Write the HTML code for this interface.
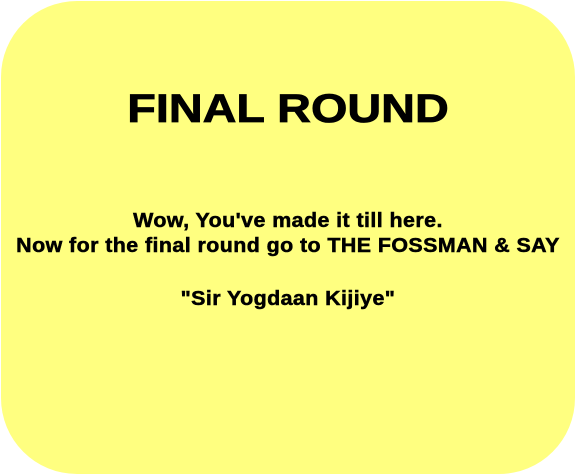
<!DOCTYPE html>
<html><head><style>
html,body{margin:0;padding:0;background:#fff;width:576px;height:475px;overflow:hidden}
.box{position:absolute;left:1px;top:1px;width:574px;height:473px;background:#ffff80;border-radius:76px;font-family:"Liberation Sans",sans-serif;font-weight:bold;color:#000;text-align:center}
.t{position:absolute;left:0;right:0;top:86px;font-size:40px;line-height:44px;transform:scaleX(1.17);-webkit-text-stroke:0.8px #000}
.b{position:absolute;left:0;right:0;font-size:20px;letter-spacing:0.4px;line-height:24px;transform:scaleX(1.07);-webkit-text-stroke:0.5px #000}
</style></head><body>
<div class="box">
<div class="t">FINAL ROUND</div>
<div class="b" style="top:208px">Wow, You've made it till here.</div>
<div class="b" style="top:233px">Now for the final round go to THE FOSSMAN &amp; SAY</div>
<div class="b" style="top:286px">"Sir Yogdaan Kijiye"</div>
</div>
</body></html>
